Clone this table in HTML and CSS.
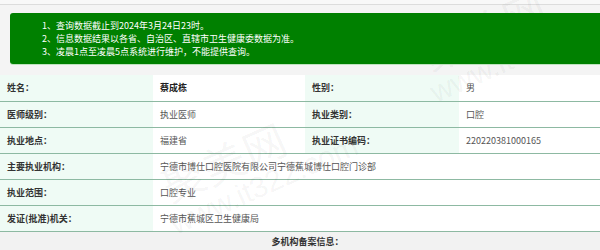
FILE: index.html
```html
<!DOCTYPE html>
<html lang="zh">
<head>
<meta charset="utf-8">
<title>查询结果</title>
<link rel="stylesheet" href="styles.css">
</head>
<body>
<div class="page">
  <div class="topbar"></div>
  <div class="notice">
    <p>1、查询数据截止到2024年3月24日23时。</p>
    <p>2、信息数据结果以各省、自治区、直辖市卫生健康委数据为准。</p>
    <p>3、凌晨1点至凌晨5点系统进行维护，不能提供查询。</p>
  </div>
  <table class="info">
    <colgroup><col class="c1"><col class="c2"><col class="c3"><col class="c4"></colgroup>
    <tr>
      <th>姓名：</th><td class="strong">蔡成栋</td>
      <th>性别：</th><td>男</td>
    </tr>
    <tr>
      <th>医师级别：</th><td>执业医师</td>
      <th>执业类别：</th><td>口腔</td>
    </tr>
    <tr>
      <th>执业地点：</th><td>福建省</td>
      <th>执业证书编码：</th><td>220220381000165</td>
    </tr>
    <tr>
      <th>主要执业机构：</th><td colspan="3">宁德市博仕口腔医院有限公司宁德蕉城博仕口腔门诊部</td>
    </tr>
    <tr>
      <th>执业范围：</th><td colspan="3">口腔专业</td>
    </tr>
    <tr>
      <th>发证(批准)机关：</th><td colspan="3">宁德市蕉城区卫生健康局</td>
    </tr>
    <tr class="section">
      <td colspan="4">多机构备案信息：</td>
    </tr>
  </table>
  <div class="wm wm1"><span class="wm-big">聚美网</span><span class="wm-url">www.it322.com</span></div>
  <div class="wm wm2"><span class="wm-big">聚美网</span><span class="wm-url">www.it322.com</span></div>
</div>
</body>
</html>
```

FILE: styles.css
```css
* { box-sizing: border-box; }
html, body {
  margin: 0;
  padding: 0;
  background: #f4f4f4;
  overflow: hidden;
}
.page {
  position: relative;
  width: 600px;
  height: 250px;
  overflow: hidden;
  font-family: "Microsoft YaHei", "Noto Sans CJK SC", "Noto Sans", sans-serif;
}
.topbar {
  height: 5px;
  background: #f8f8f8;
  border-bottom: 1px solid #dcdcdc;
}
.notice {
  position: relative;
  z-index: 2;
  margin: 8px 0 0 10px;
  width: 620px;
  height: 51px;
  padding: 6px 0 6px 32px;
  background: #008000;
  border-radius: 3px;
  box-shadow: 0 1px 0 #bfe3bf;
  color: #fff;
  font-size: 9px;
  line-height: 13px;
}
.notice p { margin: 0; white-space: nowrap; }
.info {
  margin-top: 11px;
  width: 615px;
  border-collapse: collapse;
  table-layout: fixed;
  font-size: 9px;
}
.c1 { width: 153px; }
.c2 { width: 152px; }
.c3 { width: 154px; }
.c4 { width: 156px; }
.info th, .info td {
  height: 26px;
  padding: 0 7px;
  border-bottom: 1px solid #8db9a2;
  text-align: left;
  vertical-align: middle;
  white-space: nowrap;
}
.info th {
  background: #effbf5;
  color: #333;
  font-weight: bold;
}
.info td {
  background: #fff;
  color: #555;
}
.info td.strong { color: #222; font-weight: bold; }
.info tr.section td {
  background: #f2f2f2;
  border-bottom: none;
  text-align: center;
  font-weight: bold;
  color: #333;
  height: 24px;
  padding-bottom: 4px;
}
.wm {
  position: absolute;
  z-index: 1;
  display: flex;
  flex-direction: column;
  align-items: flex-start;
  transform: rotate(-24deg);
  transform-origin: left top;
  color: rgba(0, 0, 0, 0.05);
  pointer-events: none;
  font-family: "Noto Sans CJK SC", sans-serif;
  line-height: 1;
}
.wm-big { font-size: 42px; letter-spacing: 2px; margin-left: 8px; }
.wm-url { font-size: 30px; font-family: "Liberation Sans", sans-serif; margin-top: 2px; }
.wm1 { left: 408px; top: 40px; }
.wm2 { left: 148px; top: 172px; }
```
